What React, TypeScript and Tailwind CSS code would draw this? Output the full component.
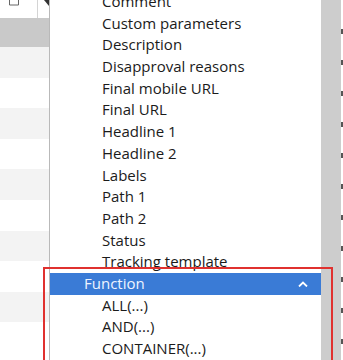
const fields = [
  "Comment",
  "Custom parameters",
  "Description",
  "Disapproval reasons",
  "Final mobile URL",
  "Final URL",
  "Headline 1",
  "Headline 2",
  "Labels",
  "Path 1",
  "Path 2",
  "Status",
  "Tracking template",
];

const functions = ["ALL(...)", "AND(...)", "CONTAINER(...)"];

const rowShades = [
  "bg-[#f3f3f3]",
  "bg-white",
  "bg-[#f3f3f3]",
  "bg-white",
  "bg-[#f3f3f3]",
  "bg-white",
  "bg-[#f3f3f3]",
  "bg-white",
  "bg-[#f3f3f3]",
  "bg-white",
];

function LeftGrid() {
  return (
    <div className="w-[50px] shrink-0 border-r border-[#b9b9b9] flex flex-col">
      <div className="h-[18px] flex bg-white">
        <div className="w-[39px] border-r border-[#d4d4d4] pl-[8px]">
          <svg width="12" height="6" viewBox="0 0 12 6">
            <path d="M1.5 0 L1.5 5 H10.5 L10.5 0" fill="none" stroke="#666" strokeWidth="1" />
          </svg>
        </div>
        <div className="flex-1">
          <svg width="8" height="7" viewBox="0 0 8 7" className="ml-[3px]">
            <path d="M8 0 L3 0 L8 6 Z" fill="#333" />
          </svg>
        </div>
      </div>
      <div className="h-[29px] bg-[#c9c9c9]" />
      {rowShades.map((c, i) => (
        <div key={i} className={`h-[30.6px] ${c}`} />
      ))}
    </div>
  );
}

function FieldList() {
  return (
    <div className="flex-1 bg-white overflow-hidden text-[15px] leading-[21.7px] text-[#1b1b1b] font-['Open_Sans','Noto_Sans',sans-serif]">
      <div className="-mt-[9px]">
        {fields.map((f) => (
          <div key={f} className="pl-[52px] h-[21.7px] whitespace-nowrap">
            {f}
          </div>
        ))}
        <div className="h-[21.7px] bg-[#3a7bd6] text-[#eef4ff] pl-[34px] pr-[13px] flex items-center justify-between">
          <span>Function</span>
          <svg width="10" height="6" viewBox="0 0 10 6">
            <path d="M1 5.5 L5 1.5 L9 5.5" fill="none" stroke="#ffffff" strokeWidth="1.8" />
          </svg>
        </div>
        {functions.map((f) => (
          <div key={f} className="pl-[52px] h-[21.7px] whitespace-nowrap">
            {f}
          </div>
        ))}
      </div>
    </div>
  );
}

export default function App() {
  return (
    <div className="relative w-[343px] h-[360px] overflow-hidden bg-white flex">
      <LeftGrid />
      <FieldList />
      <div className="w-[20px] shrink-0 bg-[#cdcdcd]" />
      <div className="w-[2px] shrink-0 bg-white flex flex-col gap-[26px] pt-[29px]">
        {[0, 1, 2, 3, 4, 5, 6, 7, 8, 9, 10].map((i) => (
          <div key={i} className="h-[5px] w-[2px] bg-[#555]" />
        ))}
      </div>
      <div className="absolute left-[43px] top-[267px] w-[290px] h-[110px] border-2 border-[#e0312f]" />
    </div>
  );
}
